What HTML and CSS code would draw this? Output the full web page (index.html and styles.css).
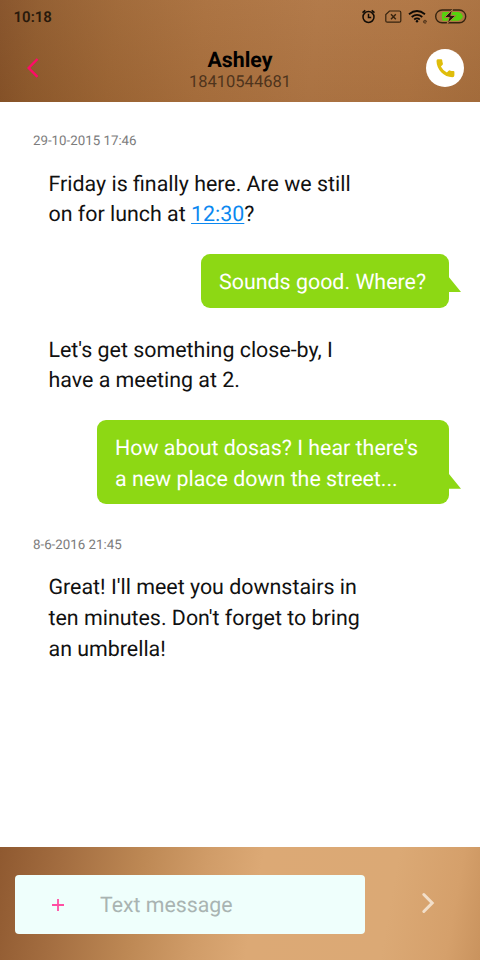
FILE: index.html
```html
<!DOCTYPE html>
<html lang="en">
<head>
<meta charset="utf-8">
<title>Ashley</title>
<link rel="stylesheet" href="styles.css">
</head>
<body>
<div class="phone">
  <header class="header">
    <div class="status">
      <span class="clock">10:18</span>
      <svg class="status-icons" width="108" height="20" viewBox="360 7 108 20" fill="none">
        <g stroke="#100b06" stroke-width="1.5">
          <circle cx="368.500" cy="17" r="5.500"/>
          <path d="M368.500 13.800v3.700h2.700M362.500 12.700l2.800-2.300M374.500 12.700l-2.800-2.300"/>
        </g>
        <path d="M389.500 11h9.800q1.500 0 1.500 1.500v8.500q0 1.200-1.500 1.200h-12q-1.500 0-1.500-1.200v-6.500z" stroke="#35230f" stroke-width="1.200"/>
        <path d="M391 14.200l4.800 5.100M395.800 14.200l-4.800 5.100" stroke="#35230f" stroke-width="1.400"/>
        <g stroke="#0e0a06" stroke-width="1.800">
          <path d="M409 14.200q8-6.400 16 0M411.700 17q5.300-4.300 10.600 0M414.200 19.500q2.800-2.100 5.600 0"/>
        </g>
        <circle cx="417" cy="21.200" r="1.200" fill="#0e0a06"/>
        <path d="M423.500 21.900h3q0-1.700-1.500-1.700t-1.500 1.700q0 1.600 2.600 1.200" stroke="#4a3018" stroke-width=".9"/>
        <rect x="435.700" y="10" width="30" height="12.800" rx="6.400" stroke="#35230f" stroke-width="1.400"/>
        <path d="M442.500 12h16q3.500 1 4.500 4.400-1 3.400-4.500 4.400h-16q-1.600-4.400 0-8.800z" fill="#55d20d"/>
        <path d="M452.500 9.500l-8 8h4.800l-2.200 6 8.700-8h-5z" fill="#24180c" stroke="#b17947" stroke-width="1"/>
      </svg>
    </div>
    <div class="titlebar">
      <svg class="back" width="14" height="22" viewBox="0 0 14 22"><path d="M11.500 2L2.700 11l8.800 8.800"/></svg>
      <div class="contact">
        <div class="name">Ashley</div>
        <div class="number">18410544681</div>
      </div>
      <div class="call">
        <svg width="38" height="38" viewBox="0 0 38 38"><path d="M11.700 10.200h3.500q.9 0 1 .9.100 1.700.7 3.300.2.700-.3 1.300l-1.700 1.800q2 4 6 6.100l1.700-1.900q.6-.5 1.300-.3 1.600.5 3.500.6 1 .1 1 1v3.200q0 2-2 2-6.500-.1-11.200-4.900-4.600-5-4.700-11.200 0-1.900 1.200-1.900z"/></svg>
      </div>
    </div>
  </header>

  <main class="thread">
    <div class="date">29-10-2015 17:46</div>
    <div class="msg in">Friday is finally here. Are we still<br>on for lunch at <a>12:30</a>?</div>
    <div class="msg out">Sounds good. Where?</div>
    <div class="msg in">Let's get something close-by, I<br>have a meeting at 2.</div>
    <div class="msg out wide">How about dosas? I hear there's<br>a new place down the street...</div>
    <div class="date later">8-6-2016 21:45</div>
    <div class="msg in">Great! I'll meet you downstairs in<br>ten minutes. Don't forget to bring<br>an umbrella!</div>
  </main>

  <footer class="composer">
    <div class="field">
      <svg class="plus" width="12" height="12" viewBox="0 0 12 12"><path d="M6 0v12M0 6h12"/></svg>
      <span class="placeholder">Text message</span>
    </div>
    <svg class="send" width="14" height="22" viewBox="0 0 14 22"><path d="M2.800 2.500l8.400 8.500-8.400 8.500"/></svg>
  </footer>
</div>
</body>
</html>
```
FILE: styles.css
```css
* { box-sizing: border-box; }

body {
  margin: 0;
  font-family: Roboto, "Liberation Sans", sans-serif;
  text-rendering: geometricPrecision;
}

.phone {
  width: 480px;
  height: 960px;
  display: flex;
  flex-direction: column;
  background: #fff;
}

.header {
  height: 102px;
  flex: none;
  background:
    linear-gradient(180deg, rgba(190, 140, 90, .12), rgba(120, 70, 20, .12)),
    linear-gradient(97deg, #824f28 0, #8e5a2e 8%, #9e6737 24%, #aa7140 42%, #b17848 65%, #b07645 85%, #a87040 100%);
}

.status {
  height: 34px;
  padding: 7px 12px 0 13.5px;
  display: flex;
  justify-content: space-between;
}

.clock {
  font-size: 15px;
  line-height: 21px;
  font-weight: 600;
  color: #291a0c;
}

.status-icons { display: block; }

.titlebar {
  height: 68px;
  padding: 0 16px 0 26px;
  display: grid;
  grid-template-columns: 38px 1fr 38px;
  align-items: center;
}

.back {
  fill: none;
  stroke: #ff0a68;
  stroke-width: 2.4;
}

.contact {
  text-align: center;
  padding: 5px 10px 0 0;
}

.name {
  font-size: 21.300px;
  line-height: 24px;
  font-weight: 700;
  color: #000;
}

.number {
  font-size: 16.500px;
  line-height: 20px;
  color: #4f341c;
}

.call {
  width: 38px;
  height: 38px;
  border-radius: 50%;
  background: #fff;
}

.call svg { display: block; fill: #dfbd0b; }

.thread {
  flex: 1;
  padding: 32px 31.500px 0 33px;
  display: flex;
  flex-direction: column;
  align-items: flex-start;
  gap: 14px;
}

.date {
  font-size: 13.300px;
  line-height: 16px;
  color: #7c7c7c;
  margin-bottom: -8.500px;
}

.date.later { margin-top: 19.500px; }

.msg {
  font-size: 21.400px;
  line-height: 30.670px;
  padding: 14px 22.500px 9px 18px;
  white-space: nowrap;
}

.in {
  color: #111;
  padding-left: 15.500px;
}

.in a {
  color: #0b88f0;
  text-decoration: underline;
  text-decoration-thickness: 1px;
  text-underline-offset: 2px;
}

.out {
  position: relative;
  align-self: flex-end;
  color: #fff;
  background: #8dd814;
  border-radius: 9px;
}

.out.wide { width: 351.500px; }

.out::after {
  content: "";
  position: absolute;
  left: 100%;
  bottom: 15.500px;
  margin-left: -.5px;
  width: 13px;
  height: 16px;
  background: #8dd814;
  clip-path: polygon(0 0, 100% 100%, 0 100%);
}

.composer {
  height: 113px;
  flex: none;
  padding: 28px 45px 26px 15px;
  display: flex;
  align-items: center;
  justify-content: space-between;
  background: linear-gradient(100deg, #8f5930 0, #a36d40 13%, #bd8854 29%, #d09c68 42%, #dca975 53%, #dba975 80%, #d5a06b 93%, #c9935e 100%);
}

.field {
  width: 350px;
  height: 59.500px;
  border-radius: 4px;
  background: #effffc;
  display: flex;
  align-items: center;
  gap: 36px;
  padding-left: 37px;
}

.plus { stroke: #ff4fa3; stroke-width: 1.800; }

.placeholder {
  font-size: 21.300px;
  line-height: 30px;
  padding-top: 3px;
  color: #a9b4b2;
}

.send {
  fill: none;
  stroke: #f2dfca;
  stroke-width: 3;
  stroke-linecap: round;
  margin-bottom: 4px;
}
```
